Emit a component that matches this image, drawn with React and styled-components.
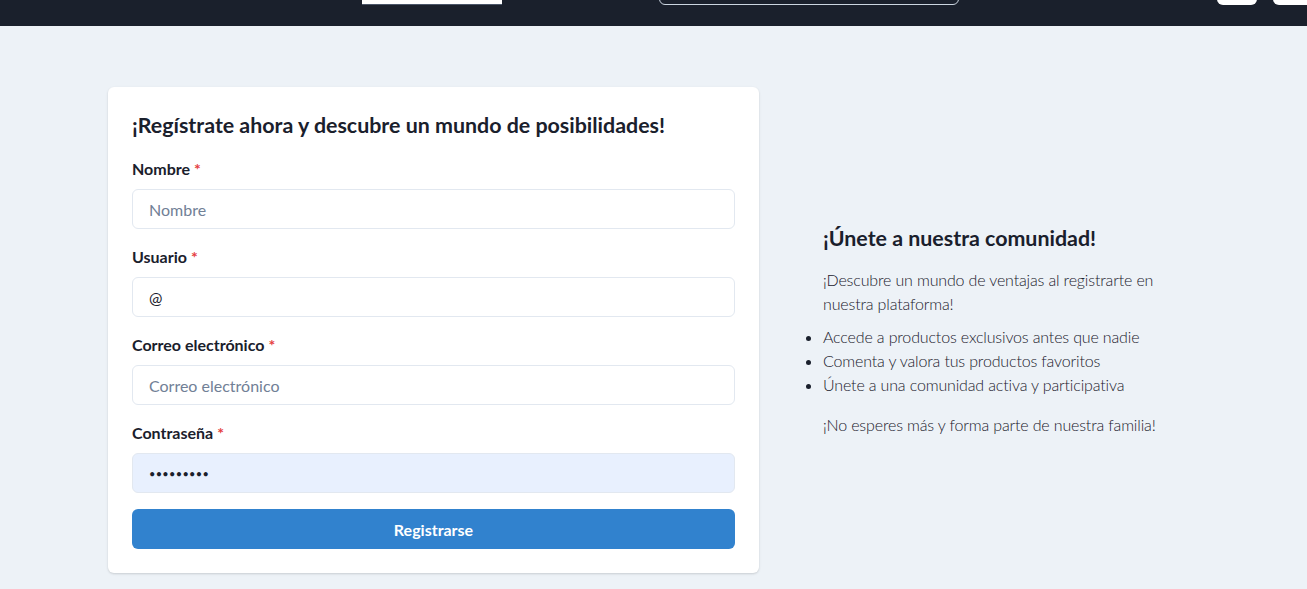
import React from 'react';
import styled, { createGlobalStyle } from 'styled-components';

const GlobalStyle = createGlobalStyle`
  * { box-sizing: border-box; }
  body {
    margin: 0;
    background: #edf2f7;
    font-family: Lato, "Open Sans", sans-serif;
    color: #1a202c;
  }
`;

// Header
const Header = styled.header`
  height: 26px;
  background: #1a202c;
  display: flex;
  align-items: flex-end;
  padding: 0 0 21px 362px;
  overflow: hidden;
`;

const Logo = styled.div`
  width: 140px;
  height: 30px;
  flex-shrink: 0;
  background: #fff;
  border-bottom: 1px solid #4a5568;
`;

const Search = styled.div`
  width: 300px;
  height: 34px;
  flex-shrink: 0;
  margin-left: 157px;
  border: 1px solid #cbd5e0;
  border-radius: 6px;
`;

const Actions = styled.div`
  margin-left: auto;
  margin-right: -30px;
  display: flex;
  gap: 16px;
`;

const HeaderButton = styled.div`
  width: ${p => p.w}px;
  height: 34px;
  background: #fff;
  border-radius: 6px;
`;

// Page
const Main = styled.main`
  display: grid;
  grid-template-columns: 651px 376px;
  column-gap: 64px;
  align-items: center;
  padding: 61px 108px 16px;
`;

const Card = styled.section`
  background: #fff;
  border-radius: 6px;
  box-shadow: 0 1px 3px rgba(0, 0, 0, 0.1), 0 1px 2px rgba(0, 0, 0, 0.06);
  padding: 24px;
`;

const Title = styled.h2`
  margin: 2px 0 20px;
  font-size: 21.4px;
  line-height: 24px;
  font-weight: 700;
  color: #1a202c;
`;

const Field = styled.div`
  margin-bottom: 16px;
`;

const Label = styled.label`
  display: block;
  font-size: 16px;
  line-height: 24px;
  font-weight: 700;
  margin-bottom: 8px;
  color: #1a202c;
`;

const Star = styled.span`
  color: #e53e3e;
  margin-left: 4px;
`;

const Input = styled.input`
  display: block;
  width: 100%;
  height: 40px;
  padding: 0 16px;
  border: 1px solid #e2e8f0;
  border-radius: 6px;
  background: ${p => (p.filled ? '#e8f0fe' : '#fff')};
  font-family: inherit;
  font-size: 16px;
  color: #1a202c;
  outline: none;
  &::placeholder { color: #718096; }
  &[type='password'] {
    font-size: 11px;
    letter-spacing: 0.3px;
  }
`;

const Submit = styled.button`
  display: block;
  width: 100%;
  height: 40px;
  border: none;
  border-radius: 6px;
  background: #3182ce;
  color: #fff;
  font-family: inherit;
  font-size: 16px;
  font-weight: 700;
`;

const Aside = styled.div`
  padding-top: 3px;
  font-weight: 300;
  font-size: 16px;
  line-height: 24px;
  letter-spacing: -0.15px;
  color: #1a202c;
`;

const AsideTitle = styled.h3`
  margin: 0 0 18px;
  font-size: 21.4px;
  line-height: 24px;
  font-weight: 700;
  letter-spacing: 0;
`;

const Text = styled.p`
  margin: 0;
`;

const List = styled.ul`
  margin: 9px 0 16px;
  padding: 0;
  list-style: disc outside;
`;

const fields = [
  { label: 'Nombre', placeholder: 'Nombre' },
  { label: 'Usuario', value: '@' },
  { label: 'Correo electrónico', placeholder: 'Correo electrónico' },
  { label: 'Contraseña', value: 'secreta12', type: 'password', filled: true },
];

export default function App() {
  return (
    <>
      <GlobalStyle />
      <Header>
        <Logo />
        <Search />
        <Actions>
          <HeaderButton w={40} />
          <HeaderButton w={64} />
        </Actions>
      </Header>
      <Main>
        <Card>
          <Title>¡Regístrate ahora y descubre un mundo de posibilidades!</Title>
          {fields.map(f => (
            <Field key={f.label}>
              <Label>
                {f.label}
                <Star>*</Star>
              </Label>
              <Input
                type={f.type || 'text'}
                placeholder={f.placeholder}
                defaultValue={f.value}
                filled={f.filled ? 1 : 0}
                readOnly={!!f.value}
              />
            </Field>
          ))}
          <Submit>Registrarse</Submit>
        </Card>
        <Aside>
          <AsideTitle>¡Únete a nuestra comunidad!</AsideTitle>
          <Text>¡Descubre un mundo de ventajas al registrarte en nuestra plataforma!</Text>
          <List>
            <li>Accede a productos exclusivos antes que nadie</li>
            <li>Comenta y valora tus productos favoritos</li>
            <li>Únete a una comunidad activa y participativa</li>
          </List>
          <Text>¡No esperes más y forma parte de nuestra familia!</Text>
        </Aside>
      </Main>
    </>
  );
}
